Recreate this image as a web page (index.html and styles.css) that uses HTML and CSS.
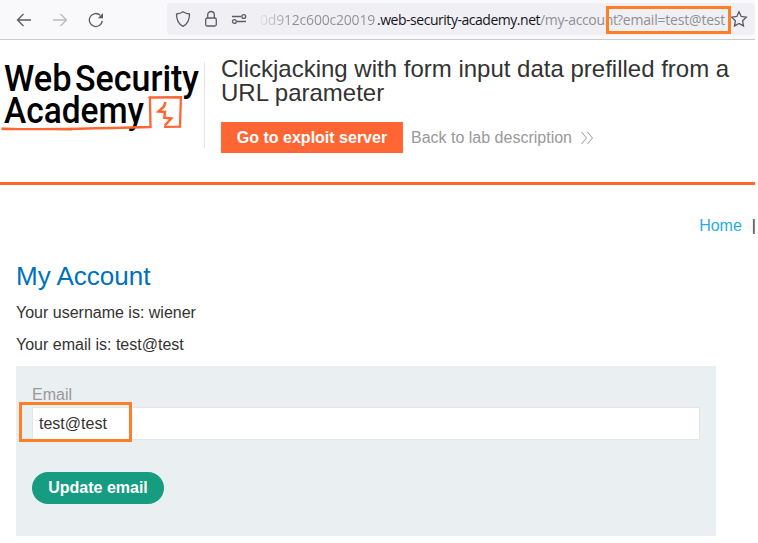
FILE: index.html
```html
<!DOCTYPE html>
<html lang="en">
<head>
<meta charset="utf-8">
<title>Clickjacking with form input data prefilled from a URL parameter</title>
<link rel="stylesheet" href="styles.css">
</head>
<body>
<div class="window">
  <div class="toolbar">
    <div class="nav-buttons">
      <svg width="16" height="16" viewBox="0 0 16 16"><path d="M15 8H1.500M7.500 2L1.500 8l6 6"/></svg>
      <svg class="disabled" width="16" height="16" viewBox="0 0 16 16"><path d="M1 8h13.500M8.500 2l6 6-6 6"/></svg>
      <svg width="16" height="16" viewBox="0 0 16 16"><path d="M14.300 8.800A6.500 6.500 0 1 1 12.200 3.200"/><path class="solid" d="M15 1v5.200H9.800z"/></svg>
    </div>
    <div class="urlbar">
      <svg width="16" height="18" viewBox="0 0 16 18"><path d="M8 1.700C6 3.100 3.900 3.700 1.500 4c0 5.600 1.500 10 6.500 12.300C13 14 14.500 9.600 14.500 4 12.100 3.700 10 3.100 8 1.700z"/></svg>
      <svg width="14" height="18" viewBox="0 0 14 18"><rect x="1.700" y="8" width="10.600" height="8" rx="1.500"/><path d="M3.700 8V4.800a3.300 3.300 0 0 1 6.600 0V8"/></svg>
      <svg width="16" height="18" viewBox="0 0 16 18"><path d="M1 6.500h9M6 11.500h9"/><circle cx="12.800" cy="6.500" r="1.900"/><circle cx="3.400" cy="11.500" r="1.900"/></svg>
      <div class="url"><span class="sub">0d912c600c20019</span><span class="domain">.web-security-academy.net</span><span class="path">/my-account</span><span class="query">?email=test@test</span></div>
      <svg class="star" width="18" height="18" viewBox="0 0 18 18"><path d="M9 1.800l2.200 4.700 5.100.7-3.700 3.500.9 5.200L9 13.400l-4.500 2.500.9-5.200L1.700 7.200l5.100-.7z"/></svg>
    </div>
    <div class="mark mark-url"></div>
  </div>

  <header class="lab-header">
    <svg class="logo" width="204" height="74" viewBox="0 0 204 74">
      <g class="logo-text">
        <text x="4" y="31" textLength="67.500" lengthAdjust="spacingAndGlyphs">Web</text>
        <text x="75" y="31" textLength="124" lengthAdjust="spacingAndGlyphs">Security</text>
        <text x="4" y="63" textLength="140" lengthAdjust="spacingAndGlyphs">Academy</text>
      </g>
      <path class="sketch" d="M1.500 69c34 .6 102-.7 149-2l-.6-29.500 31-.3-.9 29.500-16 .1"/>
      <path class="sketch fine" d="M2 68l70 2M148 37.500l34 .5"/>
      <path class="sketch bolt" d="M165.500 42l-1.500 4.500-5.500 5 6.500.5-.7 5.700 7 .8-6.500 7"/>
    </svg>
    <div class="lab-info">
      <h2>Clickjacking with form input data prefilled from a<br>URL parameter</h2>
      <div class="actions">
        <a class="exploit">Go to exploit server</a>
        <a class="back">Back to lab description<svg width="12" height="14" viewBox="0 0 12 14"><path d="M.5 1l5 6-5 6M6.500 1l5 6-5 6"/></svg></a>
      </div>
    </div>
  </header>

  <main>
    <nav><a>Home</a><span>|</span></nav>
    <h1>My Account</h1>
    <p>Your username is: wiener</p>
    <p>Your email is: test@test</p>
    <form>
      <label for="email">Email</label>
      <input id="email" type="text" value="test@test">
      <button type="button">Update email</button>
      <div class="mark mark-email"></div>
    </form>
  </main>
</div>
</body>
</html>
```
FILE: styles.css
```css
* { box-sizing: border-box; }
body {
  margin: 0;
  background: #fff;
  color: #333332;
  font: 16px/20px "Liberation Sans", Arial, sans-serif;
  overflow: hidden;
}
.window { width: 755px; height: 543px; }
.toolbar {
  position: relative;
  display: flex;
  height: 40px;
  background: #f9f9fb;
  border-bottom: 1px solid #ccc;
}
.toolbar svg { fill: none; stroke: #5b5b66; stroke-width: 1.3; flex: none; }
.toolbar .solid { fill: #5b5b66; stroke: none; }
.toolbar .disabled { opacity: .4; }
.nav-buttons {
  display: flex;
  align-items: center;
  gap: 20px;
  width: 167px;
  padding-left: 16px;
}
.urlbar {
  display: flex;
  align-items: center;
  flex: 1;
  height: 32px;
  margin-top: 3px;
  padding-left: 8px;
  gap: 13px;
  background: #f0f0f4;
  border-radius: 4px;
}
.url {
  display: flex;
  width: 466px;
  padding-top: 2px;
  font: 14px/20px "Open Sans", "Noto Sans", sans-serif;
  color: #8f8f96;
  white-space: pre;
}
.url span { flex: none; }
.sub {
  width: 117px;
  letter-spacing: -.2px;
  background: linear-gradient(90deg, #e4e4e8, #8f8f96 32px);
  -webkit-background-clip: text;
  background-clip: text;
  color: transparent;
}
.domain { width: 163px; letter-spacing: -.47px; color: #15141a; }
.path { width: 77px; letter-spacing: -.35px; }
.query { letter-spacing: -.2px; }
.toolbar .star { margin-left: -9px; }
.mark { position: absolute; border: 3px solid #ff7f27; }
.mark-url { left: 606px; top: 6px; width: 125px; height: 28px; }

.lab-header {
  display: flex;
  height: 145px;
  padding-top: 20px;
  border-bottom: 3px solid #ff6633;
}
.logo { flex: none; overflow: visible; }
.logo-text { font: 500 37px Roboto, sans-serif; fill: #000; }
.sketch { fill: none; stroke: #ff6633; stroke-width: 2.3; }
.fine { stroke-width: 1; }
.bolt { stroke-width: 2.5; }
.lab-info {
  height: 86px;
  margin-top: 2px;
  padding-left: 16px;
  border-left: 1px solid #e5e5e5;
}
h1, h2, p { margin: 0; font-weight: normal; }
h2 { margin-top: -5px; font-size: 24px; line-height: 24px; white-space: nowrap; }
.actions { display: flex; align-items: center; margin-top: 17px; gap: 8px; }
.exploit {
  width: 182px;
  background: #ff6633;
  color: #fff;
  font-weight: bold;
  line-height: 31px;
  text-align: center;
}
.back { display: flex; align-items: center; gap: 9px; color: #999; }
.back svg { fill: none; stroke: #999; stroke-width: 1; }

main { padding: 31px 0 0 16px; }
nav { display: flex; justify-content: flex-end; gap: 10px; margin-right: -1px; }
nav a { color: #29abe2; }
h1 { margin-top: 24px; color: #0071bc; font-size: 26px; line-height: 32px; }
p { line-height: 32px; margin-top: 5px; }
p + p { margin-top: 0; }
form {
  position: relative;
  display: flex;
  flex-direction: column;
  align-items: flex-start;
  width: 700px;
  height: 170px;
  margin-top: 5px;
  padding: 19px 16px;
  background: #eaeff2;
}
label { color: #999; line-height: 20px; }
input {
  width: 668px;
  height: 33px;
  margin: 2px 0 32px;
  padding: 0 6px;
  border: 1px solid #e5e5e5;
  background: #fff;
  color: #333332;
  font: inherit;
}
button {
  width: 132px;
  height: 32px;
  padding: 0;
  border: 0;
  border-radius: 16px;
  background: #169c80;
  color: #fff;
  font: bold 16px/32px "Liberation Sans", Arial, sans-serif;
}
.mark-email { left: 3px; top: 36px; width: 113px; height: 40px; }
```
